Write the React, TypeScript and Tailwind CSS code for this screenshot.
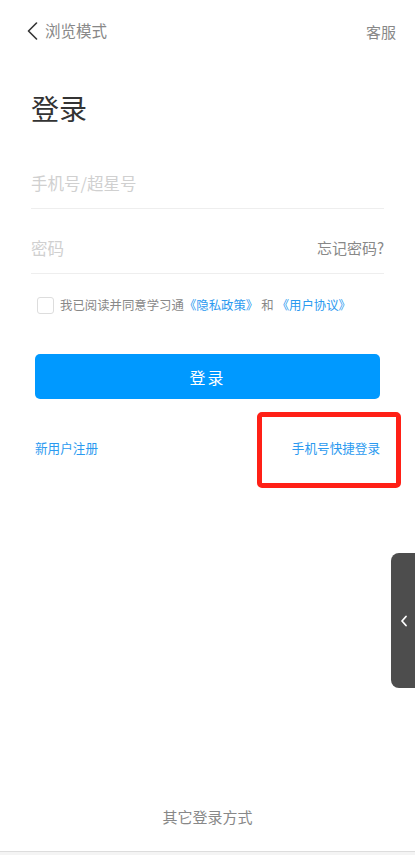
import React from "react"

const font = { fontFamily: '"Noto Sans CJK SC", "Noto Sans", sans-serif' }

const BackIcon = () => (
  <svg width="12" height="18" viewBox="0 0 12 18" fill="none">
    <path d="M10.5 1 L2.5 9 L10.5 17" stroke="#333" strokeWidth="1.6" strokeLinecap="round" strokeLinejoin="round" />
  </svg>
)

const Login = () => {
  const [agreed, setAgreed] = React.useState(false)

  return (
    <div className="relative w-[415px] h-[855px] bg-white overflow-hidden flex flex-col" style={font}>
      {/* top bar */}
      <div className="h-[62px] flex items-center justify-between pl-[26px] pr-[19px]">
        <div className="flex items-center gap-[7px]">
          <BackIcon />
          <span className="text-[15.5px] text-[#888888] leading-none">浏览模式</span>
        </div>
        <span className="text-[15px] text-[#888888] leading-none">客服</span>
      </div>

      <div className="px-[31px]">
        <p className="mt-[30px] text-[28px] leading-[32px] text-[#333333]">登录</p>

        <div className="mt-[34px] h-[51px] flex items-center border-b border-[#eeeeee]">
          <span className="text-[16.5px] text-[#d0d0d0]">手机号/超星号</span>
        </div>
        <div className="mt-[14px] h-[51px] flex items-center justify-between border-b border-[#eeeeee]">
          <span className="text-[16.5px] text-[#d0d0d0]">密码</span>
          <span className="text-[15px] text-[#888888]">忘记密码?</span>
        </div>

        <div className="mt-[23px] px-[6px] flex items-center gap-[6px]">
          <button
            onClick={() => setAgreed(!agreed)}
            className="w-[17px] h-[17px] rounded-[3px] border border-[#dddddd] bg-white"
          />
          <p className="text-[12.4px] text-[#888888] leading-none whitespace-nowrap">
            我已阅读并同意学习通<span className="text-[#2b9af0]">《隐私政策》</span>
            <span className="mx-[3px]">和</span>
            <span className="text-[#2b9af0]">《用户协议》</span>
          </p>
        </div>

        <div className="px-[4px]">
          <button className="mt-[40px] w-full h-[45px] rounded-[5px] bg-[#0099ff] text-white text-[16px] tracking-[2px]">
            登录
          </button>

          <div className="mt-[43px] flex items-center justify-between">
            <span className="text-[12.6px] text-[#2b9af0] leading-none">新用户注册</span>
            <span className="relative text-[12.6px] text-[#2b9af0] leading-none">
              手机号快捷登录
              <span className="absolute -left-[35px] -right-[21px] -top-[30px] -bottom-[33px] border-[5px] border-[#ff2016] rounded-[5px]" />
            </span>
          </div>
        </div>
      </div>

      {/* bottom */}
      <div className="mt-auto flex flex-col">
        <p className="text-center text-[15px] text-[#888888] pb-[23px]">其它登录方式</p>
        <div className="h-[4px] border-t border-[#dddddd] bg-[#f4f4f4]" />
      </div>

      {/* side drawer tab */}
      <div className="absolute right-0 top-[553px] w-[24px] h-[135px] rounded-l-[8px] bg-[#4d4d4d] flex items-center justify-center">
        <svg width="8" height="12" viewBox="0 0 8 12" fill="none" className="ml-[2px]">
          <path d="M6 1.5 L2 6 L6 10.5" stroke="#fff" strokeWidth="1.8" strokeLinecap="round" strokeLinejoin="round" />
        </svg>
      </div>
    </div>
  )
}

export default function App() {
  return <Login />
}
